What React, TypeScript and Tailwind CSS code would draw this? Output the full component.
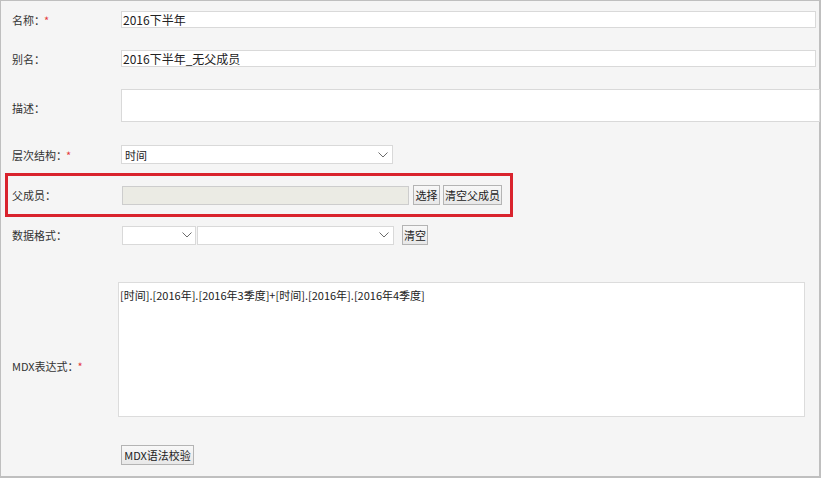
import React from "react";

const Chevron = () => (
  <svg width="10" height="6" viewBox="0 0 10 6" className="shrink-0">
    <path d="M0.5 0.5 L5 5 L9.5 0.5" fill="none" stroke="#6b6b6b" strokeWidth="1" />
  </svg>
);

const Star = () => <span className="text-[#e4393c] ml-[-1px] text-[11px]">*</span>;

const Btn = ({ children, w }: { children: React.ReactNode; w: string }) => (
  <div
    className={`${w} h-[20px] shrink-0 flex items-center justify-center whitespace-nowrap border border-[#b4b4b4] bg-gradient-to-b from-[#f8f8f8] to-[#e8e8e8] text-[#222] text-[11px] leading-none`}
  >
    {children}
  </div>
);

export default function App() {
  return (
    <div className="w-[821px] h-[478px] bg-[#f5f5f5] border-l border-t border-r-2 border-b-2 border-[#bfbfbf] flex flex-col text-[11px] text-[#333] leading-[14px] font-['Noto_Sans_CJK_SC','Microsoft_YaHei',sans-serif]">
      {/* 名称 */}
      <div className="flex items-center h-[17px] mt-[10px]">
        <div className="w-[120px] shrink-0 pl-[11px] whitespace-nowrap">
          名称：<Star />
        </div>
        <div className="w-[695px] h-[17px] shrink-0 bg-white border border-[#d9d9d9] pl-[1px] flex items-center text-[12px] text-[#222]">
          2016下半年
        </div>
      </div>

      {/* 别名 */}
      <div className="flex items-center h-[17px] mt-[22px]">
        <div className="w-[120px] shrink-0 pl-[11px]">别名：</div>
        <div className="w-[695px] h-[17px] shrink-0 bg-white border border-[#d9d9d9] pl-[1px] flex items-center text-[12px] text-[#222]">
          2016下半年_无父成员
        </div>
      </div>

      {/* 描述 */}
      <div className="flex items-center h-[33px] mt-[22px]">
        <div className="w-[120px] shrink-0 pl-[11px] pt-[5px]">描述：</div>
        <div className="w-[699px] h-[33px] shrink-0 bg-white border border-[#d9d9d9]" />
      </div>

      {/* 层次结构 */}
      <div className="flex items-center h-[19px] mt-[23px]">
        <div className="w-[120px] shrink-0 pl-[11px] whitespace-nowrap">
          层次结构：<Star />
        </div>
        <div className="w-[272px] h-[19px] shrink-0 bg-white border border-[#d9d9d9] pl-[3px] pr-[4px] flex items-center justify-between text-[#222]">
          <span>时间</span>
          <Chevron />
        </div>
      </div>

      {/* 父成员 (highlighted) */}
      <div className="ml-[4px] mt-[9px] w-[508px] h-[44px] border-[3px] border-[#d9232d] flex items-center">
        <div className="w-[114px] shrink-0 pl-[4px]">父成员：</div>
        <div className="w-[287px] h-[19px] shrink-0 bg-[#ebebe4] border border-[#cdcdcd]" />
        <div className="ml-[4px]">
          <Btn w="w-[27px]">选择</Btn>
        </div>
        <div className="ml-[3px]">
          <Btn w="w-[59px]">清空父成员</Btn>
        </div>
      </div>

      {/* 数据格式 */}
      <div className="flex items-center h-[20px] mt-[8px]">
        <div className="w-[121px] shrink-0 pl-[11px]">数据格式：</div>
        <div className="w-[74px] h-[19px] shrink-0 bg-white border border-[#d9d9d9] pr-[3px] flex items-center justify-end">
          <Chevron />
        </div>
        <div className="ml-[1px] w-[197px] h-[19px] shrink-0 bg-white border border-[#d9d9d9] pr-[4px] flex items-center justify-end">
          <Chevron />
        </div>
        <div className="ml-[8px]">
          <Btn w="w-[26px]">清空</Btn>
        </div>
      </div>

      {/* MDX表达式 */}
      <div className="flex items-start h-[135px] mt-[37px]">
        <div className="w-[117px] shrink-0 pl-[11px] mt-[77px] whitespace-nowrap">
          MDX表达式：<Star />
        </div>
        <div className="w-[687px] h-[135px] shrink-0 bg-white border border-[#dcdcdc] pl-[1px] pt-[5px] text-[#222]">
          [时间].[2016年].[2016年3季度]+[时间].[2016年].[2016年4季度]
        </div>
      </div>

      {/* 按钮 */}
      <div className="flex mt-[28px] pl-[120px]">
        <Btn w="w-[73px]">MDX语法校验</Btn>
      </div>
    </div>
  );
}
